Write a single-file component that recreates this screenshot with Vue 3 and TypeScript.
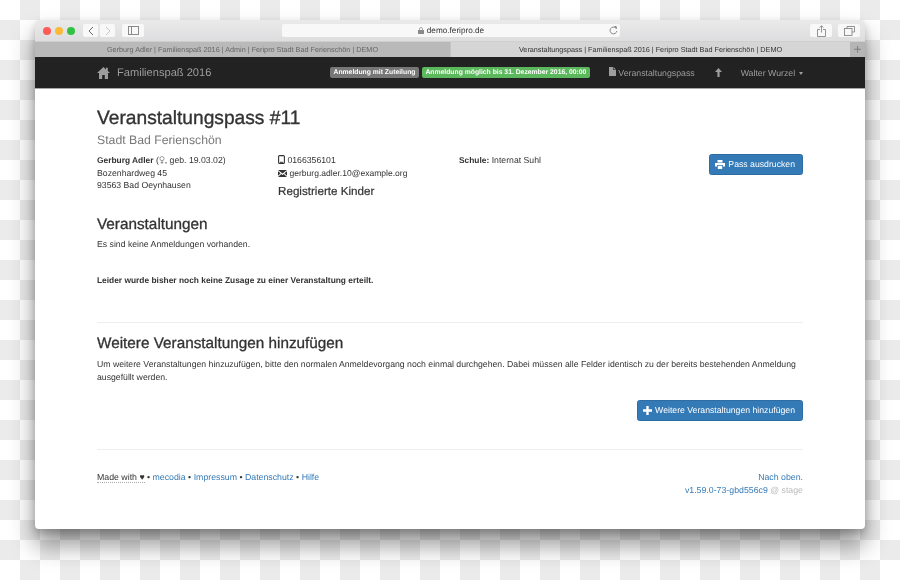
<script setup lang="ts">
const footerLinks = ['mecodia', 'Impressum', 'Datenschutz', 'Hilfe']
</script>

<template>
  <div class="page">
    <div class="window">
      <div class="toolbar">
        <div class="lights">
          <span class="light red"></span>
          <span class="light yellow"></span>
          <span class="light green"></span>
        </div>
        <div class="nav-buttons">
          <button class="tool-btn small">
            <svg width="6" height="10" viewBox="0 0 6 10"><path d="M5 1L1 5l4 4" fill="none" stroke="#6b6b6b" stroke-width="1" /></svg>
          </button>
          <button class="tool-btn small">
            <svg width="6" height="10" viewBox="0 0 6 10"><path d="M1 1l4 4-4 4" fill="none" stroke="#c4c4c4" stroke-width="1" /></svg>
          </button>
        </div>
        <button class="tool-btn sidebar">
          <svg width="11" height="9" viewBox="0 0 11 9"><rect x="0.5" y="0.5" width="10" height="8" fill="none" stroke="#8a8a8a" /><path d="M3.5 0.5v8" stroke="#8a8a8a" /></svg>
        </button>
        <div class="url">
          <span class="url-text">
            <svg width="6" height="7" viewBox="0 0 6 7"><path d="M1.5 3V2a1.5 1.5 0 0 1 3 0v1" fill="none" stroke="#8a8a8a" stroke-width=".7" /><rect y="3" width="6" height="4" fill="#8a8a8a" /></svg>
            demo.feripro.de
          </span>
          <svg class="reload" width="9" height="9" viewBox="0 0 9 9"><path d="M7.8 5a3.4 3.4 0 1 1-1-3L7.6 2.8" fill="none" stroke="#6f6f6f" stroke-width=".8" /><path d="M5 .2h2.6v2.6z" fill="#6f6f6f" /></svg>
        </div>
        <div class="tool-right">
          <button class="tool-btn action">
            <svg width="9" height="12" viewBox="0 0 9 12"><path d="M3 4.5H.5v7h8v-7H6M4.5 7.5V.8M2.6 2.6L4.5.7l1.9 1.9" fill="none" stroke="#7a7a7a" stroke-width=".8" /></svg>
          </button>
          <button class="tool-btn action">
            <svg width="11" height="10" viewBox="0 0 11 10"><path d="M3 2.5V.5h7.5V6H8" fill="none" stroke="#7a7a7a" stroke-width=".8" /><rect x=".5" y="2.5" width="7.5" height="7" fill="none" stroke="#7a7a7a" stroke-width=".8" /></svg>
          </button>
        </div>
      </div>

      <div class="tabs">
        <div class="tab">Gerburg Adler | Familienspaß 2016 | Admin | Feripro Stadt Bad Ferienschön | DEMO</div>
        <div class="tab active">Veranstaltungspass | Familienspaß 2016 | Feripro Stadt Bad Ferienschön | DEMO</div>
        <div class="tab-add">+</div>
      </div>

      <nav class="navbar">
        <svg class="home" width="13" height="12" viewBox="0 0 13 12"><path d="M6.5 0L0 6h2v6h3.2V8h2.6v4H11V6h2L10.8 4V.8H9v1.6z" fill="#9d9d9d" /></svg>
        <span class="brand">Familienspaß 2016</span>
        <span class="badge grey">Anmeldung mit Zuteilung</span>
        <span class="badge ok">Anmeldung möglich bis 31. Dezember 2016, 00:00</span>
        <span class="nav-item pass">
          <svg width="7" height="9" viewBox="0 0 7 9"><path d="M0 0h4v3h3v6H0zM4.6 0L7 2.4H4.6z" fill="#9d9d9d" /></svg>
          Veranstaltungspass
        </span>
        <svg class="up" width="7" height="9" viewBox="0 0 7 9"><path d="M3.5 0L7 4H4.6v5H2.4V4H0z" fill="#9d9d9d" /></svg>
        <span class="nav-item user">Walter Wurzel <i class="caret"></i></span>
      </nav>

      <main class="content">
        <h1>Veranstaltungspass #11</h1>
        <p class="subtitle">Stadt Bad Ferienschön</p>

        <div class="info">
          <div>
            <div><b>Gerburg Adler</b> (<svg class="female" width="6" height="8" viewBox="0 0 6 8"><circle cx="3" cy="2.6" r="2.1" fill="none" stroke="#777" stroke-width=".7" /><path d="M3 4.7V8M1.5 6.4h3" stroke="#777" stroke-width=".7" /></svg>, geb. 19.03.02)</div>
            <div>Bozenhardweg 45</div>
            <div>93563 Bad Oeynhausen</div>
          </div>
          <div>
            <div class="contact">
              <svg width="7" height="9" viewBox="0 0 7 9"><rect x=".6" y=".6" width="5.8" height="7.8" rx="1" fill="none" stroke="#333" stroke-width="1.1" /><path d="M2 7.3h3" stroke="#333" /></svg>
              0166356101
            </div>
            <div class="contact">
              <svg width="9" height="7" viewBox="0 0 9 7"><path d="M0 0h9L4.5 3.6zM0 1.2v4.6L2.6 3.3zM9 1.2v4.6L6.4 3.3zM0 7l3.2-3.1 1.3 1 1.3-1L9 7z" fill="#333" /></svg>
              <span class="mail">gerburg.adler.10@example.org</span>
            </div>
            <h4>Registrierte Kinder</h4>
          </div>
          <div><b>Schule:</b> Internat Suhl</div>
          <div class="print">
            <a class="btn">
              <svg width="10" height="9" viewBox="0 0 10 9"><path d="M2.5 0h5v2.6h-5zM0 3h10v3.6H8V5H2v1.6H0zM2.8 5.8h4.4V9H2.8z" fill="#fff" /></svg>
              Pass ausdrucken
            </a>
          </div>
        </div>

        <h2 class="events-title">Veranstaltungen</h2>
        <p class="empty">Es sind keine Anmeldungen vorhanden.</p>
        <p class="notice"><b>Leider wurde bisher noch keine Zusage zu einer Veranstaltung erteilt.</b></p>
        <hr class="rule-top" />

        <h2 class="more-title">Weitere Veranstaltungen hinzufügen</h2>
        <p class="more-text">Um weitere Veranstaltungen hinzuzufügen, bitte den normalen Anmeldevorgang noch einmal durchgehen. Dabei müssen alle Felder identisch zu der bereits bestehenden Anmeldung ausgefüllt werden.</p>
        <div class="more-action">
          <a class="btn">
            <svg width="9" height="9" viewBox="0 0 9 9"><path d="M3.3 0h2.4v3.3H9v2.4H5.7V9H3.3V5.7H0V3.3h3.3z" fill="#fff" /></svg>
            Weitere Veranstaltungen hinzufügen
          </a>
        </div>
        <hr class="rule-bottom" />

        <footer class="footer">
          <div>
            <span class="made">Made with ♥</span>
            <template v-for="link in footerLinks" :key="link"> • <a>{{ link }}</a></template>
          </div>
          <div class="footer-right">
            <div><a>Nach oben.</a></div>
            <div><a>v1.59.0-73-gbd556c9</a> <span class="stage">@ stage</span></div>
          </div>
        </footer>
      </main>
    </div>
  </div>
</template>

<style>
html,
body {
  margin: 0;
  background: #fff;
}
</style>

<style scoped>
.page {
  width: 900px;
  height: 580px;
  padding: 20px 35px 51px;
  box-sizing: border-box;
  overflow: hidden;
  font-family: 'Liberation Sans', Arial, sans-serif;
  text-rendering: geometricPrecision;
  background-color: #fff;
  background-image: conic-gradient(#ebebeb 25%, #fff 25% 50%, #ebebeb 50% 75%, #fff 75%);
  background-size: 40px 40px;
}
.window {
  height: 100%;
  display: flex;
  flex-direction: column;
  background: #fff;
  border-radius: 4px;
  overflow: hidden;
  box-shadow: 0 16px 24px rgba(0, 0, 0, 0.42), 0 4px 8px rgba(0, 0, 0, 0.2);
  filter: blur(0.3px);
}
.toolbar {
  height: 22px;
  flex: none;
  box-sizing: border-box;
  display: flex;
  align-items: center;
  padding: 0 5px 0 8px;
  background: linear-gradient(#eaeaea, #dedddf);
  border-bottom: 1px solid #cfcfcf;
}
.lights {
  display: flex;
  gap: 4px;
  width: 40px;
  flex: none;
}
.light {
  width: 8px;
  height: 8px;
  border-radius: 50%;
}
.red { background: #fc5b57; }
.yellow { background: #fbb93a; }
.green { background: #31c242; }
.nav-buttons {
  display: flex;
  gap: 2px;
}
.tool-btn {
  height: 13px;
  padding: 0;
  border: 0;
  border-radius: 2px;
  background: #f8f8f8;
  display: flex;
  align-items: center;
  justify-content: center;
}
.small { width: 15px; }
.sidebar { width: 22px; margin-left: 7px; }
.url {
  width: 338px;
  height: 13px;
  margin-left: 138px;
  position: relative;
  background: #f8f8f8;
  border-radius: 2px;
  display: flex;
  align-items: center;
  justify-content: center;
}
.url-text {
  font-size: 8.2px;
  color: #333;
  display: flex;
  align-items: center;
  gap: 3px;
}
.reload {
  position: absolute;
  right: 2px;
  top: 2px;
}
.tool-right {
  margin-left: auto;
  display: flex;
  gap: 6px;
}
.action { width: 22px; }
.tabs {
  height: 15px;
  flex: none;
  display: flex;
  font-size: 7.25px;
  line-height: 15px;
  text-align: center;
  color: #666;
  background: #b9b9b9;
  box-sizing: border-box;
}
.tab {
  width: 415px;
  white-space: nowrap;
}
.tab.active {
  width: 400px;
  background: #d6d5d6;
  color: #333;
  border-left: 1px solid #c4c4c4;
  box-sizing: border-box;
}
.tab-add {
  flex: 1;
  font-size: 14px;
  color: #7f7f7f;
  background: #b5b5b5;
}
.navbar {
  height: 32px;
  flex: none;
  box-sizing: border-box;
  display: flex;
  align-items: center;
  padding: 0 62px;
  background: #222;
  color: #9d9d9d;
  border-bottom: 1px solid #a8a8a8;
}
.navbar > * {
  flex: none;
}
.home { margin-right: 7px; }
.brand {
  font-size: 11.1px;
  width: 213px;
  white-space: nowrap;
}
.badge {
  height: 11px;
  line-height: 11px;
  padding: 0 3.5px;
  font-size: 6.8px;
  font-weight: 700;
  color: #fff;
  border-radius: 2px;
  white-space: nowrap;
}
.grey { background: #777; }
.ok {
  background: #5cb85c;
  margin-left: 3px;
}
.nav-item {
  font-size: 8.75px;
  white-space: nowrap;
}
.pass { margin-left: 19px; }
.up { margin: 0 19px 0 20px; }
.caret {
  display: inline-block;
  margin-left: 1px;
  vertical-align: middle;
  border-top: 3px solid #9d9d9d;
  border-left: 2.5px solid transparent;
  border-right: 2.5px solid transparent;
}
.content {
  flex: 1;
  padding: 0 62px;
  font-size: 8.7px;
  line-height: 12.5px;
  color: #333;
}
b {
  font-size: 8.4px;
}
h1 {
  margin: 18px 0 0;
  font-size: 19.2px;
  line-height: 24px;
  font-weight: 400;
  color: #333;
  -webkit-text-stroke: 0.35px #333;
}
.subtitle {
  margin: 1px 0 0;
  font-size: 12.25px;
  line-height: 16px;
  color: #777;
}
.info {
  display: grid;
  grid-template-columns: 181px 181px 1fr auto;
  margin-top: 6px;
}
.contact svg {
  vertical-align: -1px;
}
.mail {
  margin-left: 2.5px;
  font-size: 8.55px;
}
.female {
  vertical-align: -1px;
}
h4 {
  margin: 6px 0 0;
  font-size: 11.65px;
  line-height: 14px;
  font-weight: 400;
  -webkit-text-stroke: 0.2px #333;
}
.btn {
  display: inline-flex;
  align-items: center;
  gap: 3px;
  height: 21px;
  padding: 0 7px 0 5px;
  box-sizing: border-box;
  background: #337ab7;
  border: 1px solid #2e6da4;
  border-radius: 2.5px;
  color: #fff;
  font-size: 8.7px;
  white-space: nowrap;
}
h2 {
  margin: 0;
  font-size: 15.3px;
  line-height: 18px;
  font-weight: 400;
  -webkit-text-stroke: 0.3px #333;
}
.events-title { margin-top: 17px; }
.empty { margin: 4px 0 0; }
.notice { margin: 23px 0 0; }
.rule-top { margin: 36px 0 0; }
hr {
  border: 0;
  border-top: 1px solid #eee;
}
.more-title { margin-top: 12px; }
.more-text { margin: 5px 0 0; }
.more-action {
  display: flex;
  justify-content: flex-end;
  margin-top: 17px;
}
.rule-bottom { margin: 28px 0 0; }
.footer {
  display: flex;
  justify-content: space-between;
  margin-top: 21px;
  font-size: 8.78px;
}
.footer a { color: #337ab7; }
.made {
  border-bottom: 1px dotted #aaa;
}
.footer-right { text-align: right; }
.stage { color: #bbb; }
</style>
